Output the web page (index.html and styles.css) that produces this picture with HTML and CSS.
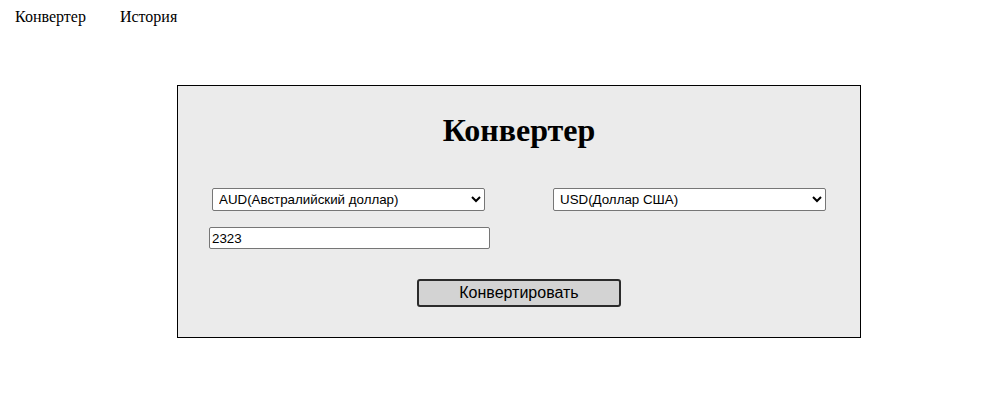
FILE: index.html
```html
<!DOCTYPE html>
<html lang="ru">
<head>
<meta charset="utf-8">
<title>Конвертер</title>
<link rel="stylesheet" href="styles.css">
</head>
<body>
<nav class="nav">
  <a class="nav-link" href="#">Конвертер</a>
  <a class="nav-link" href="#">История</a>
</nav>
<main class="converter">
  <h1 class="title">Конвертер</h1>
  <div class="selects">
    <select class="currency">
      <option>AUD(Австралийский доллар)</option>
    </select>
    <select class="currency">
      <option>USD(Доллар США)</option>
    </select>
  </div>
  <div class="amount-row">
    <input class="amount" type="text" value="2323">
  </div>
  <div class="actions">
    <button class="convert" type="button">Конвертировать</button>
  </div>
</main>
</body>
</html>
```

FILE: styles.css
```css
html, body {
  margin: 0;
  padding: 0;
  background: #ffffff;
}
body {
  font-family: "Liberation Serif", "Times New Roman", serif;
  font-size: 16px;
  color: #000;
}
.nav {
  display: flex;
  gap: 34px;
  padding: 8px 15px 0;
}
.nav-link {
  color: #000;
  text-decoration: none;
  font-size: 16px;
  line-height: 18px;
}
.converter {
  width: 682px;
  margin: 59px 0 0 177px;
  border: 1px solid #000;
  background: #ebebeb;
  padding: 0 0 30px;
}
.title {
  margin: 26px 0 0;
  text-align: center;
  font-size: 32px;
  font-weight: bold;
  line-height: 37px;
}
.selects {
  display: flex;
  justify-content: space-between;
  padding: 0 34px 0 34px;
  margin-top: 39px;
}
.currency {
  width: 273px;
  height: 23px;
  font-family: "Liberation Sans", Arial, sans-serif;
  font-size: 13.33px;
  background: #fff;
  border: 1px solid #767676;
  border-radius: 2px;
  color: #000;
  padding: 0 2px;
}
.amount-row {
  padding-left: 31px;
  margin-top: 16px;
}
.amount {
  box-sizing: border-box;
  width: 281px;
  height: 22px;
  font-family: "Liberation Sans", Arial, sans-serif;
  font-size: 13.33px;
  border: 1px solid #767676;
  border-radius: 2px;
  padding: 1px 2px;
  background: #fff;
}
.actions {
  display: flex;
  justify-content: center;
  margin-top: 30px;
}
.convert {
  box-sizing: border-box;
  width: 204px;
  height: 28px;
  font-family: "Liberation Sans", Arial, sans-serif;
  font-size: 16px;
  background: #d3d3d3;
  border: 2px solid #2b2b2b;
  border-radius: 3px;
  color: #000;
  padding: 0;
}
```
